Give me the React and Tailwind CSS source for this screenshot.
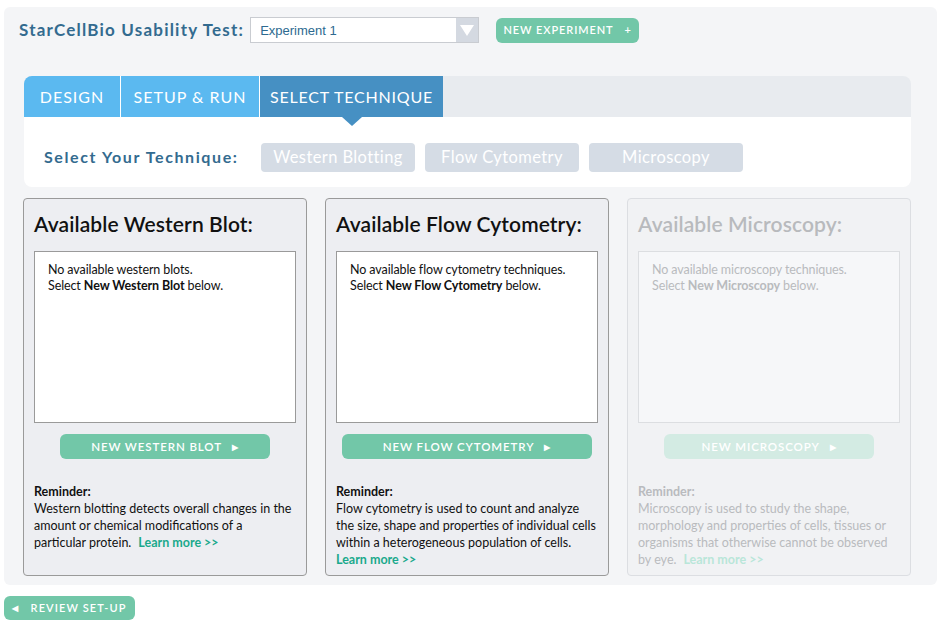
import React from "react";

const font = { fontFamily: "Lato, 'Open Sans', sans-serif" };

function Card({ title, empty1, emptyBold, btn, btnW, reminder, disabled }) {
  const c = disabled;
  return (
    <div
      className={`w-[284px] h-[378px] rounded-[4px] border px-[10px] pt-[11px] ${
        c ? "border-[#dcdee2] bg-[#f1f2f4]" : "border-[#9a9a9a] bg-[#edeef2]"
      }`}
    >
      <div className={`text-[21px] leading-[28px] font-semibold tracking-[0.1px] ${c ? "text-[#b8babd]" : "text-[#111]"}`}>{title}</div>
      <div
        className={`mt-[13px] h-[172px] border px-[13px] pt-[10px] text-[12.5px] leading-[16px] tracking-[-0.1px] ${
          c ? "border-[#dcdee1] bg-[#f6f7f9] text-[#b9bbbe]" : "border-[#9a9a9a] bg-white text-[#111]"
        }`}
      >
        <div>{empty1}</div>
        <div>
          Select <span className="font-bold">{emptyBold}</span> below.
        </div>
      </div>
      <div className="flex justify-center mt-[11px]">
        <div
          className={`h-[25px] rounded-[6px] flex items-center justify-center text-[11.5px] font-semibold tracking-[0.9px] text-white ${btnW} ${
            c ? "bg-[#d3ebe3]" : "bg-[#72c7a8]"
          }`}
        >
          {btn}
          <span className="ml-[10px] text-[8px]">▶</span>
        </div>
      </div>
      <div className={`mt-[24px] text-[12.5px] leading-[17px] whitespace-nowrap ${c ? "text-[#b9bbbe]" : "text-[#111]"}`}>
        <div className="font-bold">Reminder:</div>
        {reminder}
      </div>
    </div>
  );
}

export default function App() {
  return (
    <div className="w-[945px] h-[626px] bg-white pt-[7px] overflow-hidden" style={font}>
      <div className="ml-[4px] w-[933px] h-[578px] bg-[#f4f5f7] rounded-[6px] pt-[10px]">
        {/* header */}
        <div className="flex items-center h-[26px] pl-[15px]">
          <div className="text-[17px] font-bold text-[#336b8f] tracking-[1.2px]">StarCellBio Usability Test:</div>
          <div className="ml-[6px] w-[229px] h-[26px] flex border border-[#c9ccd1] bg-white">
            <div
              className="flex-1 flex items-center pl-[9px] pt-[2px] text-[13px] text-[#2d6a90]"
              style={{ fontFamily: "'Liberation Sans', Arial, sans-serif" }}
            >
              Experiment 1
            </div>
            <div className="w-[22px] bg-[#d4d9e1] flex items-center justify-center">
              <svg width="14" height="11" viewBox="0 0 14 11">
                <polygon points="0,0 14,0 7,11" fill="#fff" />
              </svg>
            </div>
          </div>
          <div className="ml-[17px] w-[143px] h-[25px] rounded-[6px] bg-[#72c7a8] flex items-center justify-center text-white text-[11px] font-semibold tracking-[0.9px]">
            NEW EXPERIMENT<span className="ml-[11px]">+</span>
          </div>
        </div>

        {/* tabs panel */}
        <div className="ml-[20px] w-[887px] mt-[33px]">
          <div className="h-[41px] bg-[#e8ebef] rounded-t-[8px] flex">
            <div className="w-[96px] bg-[#5bb9f0] rounded-tl-[8px] flex items-center justify-center text-white text-[16px] tracking-[1px]">
              DESIGN
            </div>
            <div className="w-px bg-white" />
            <div className="w-[138px] bg-[#5bb9f0] flex items-center justify-center text-white text-[16px] tracking-[1px]">
              SETUP &amp; RUN
            </div>
            <div className="w-px bg-white" />
            <div className="relative w-[183px] bg-[#4690c3] flex items-center justify-center text-white text-[16px] tracking-[0.8px]">
              SELECT TECHNIQUE
              <div className="absolute left-[82px] top-[41px] w-0 h-0 border-l-[10px] border-r-[10px] border-t-[9px] border-l-transparent border-r-transparent border-t-[#4690c3]" />
            </div>
          </div>
          <div className="h-[70px] bg-white rounded-b-[8px] flex items-center pl-[20px] pt-[10px]">
            <div className="w-[217px] text-[16px] font-bold text-[#336b8f] tracking-[1.6px]">Select Your Technique:</div>
            <div className="flex gap-[10px]">
              {["Western Blotting", "Flow Cytometry", "Microscopy"].map((t) => (
                <div
                  key={t}
                  className="w-[154px] h-[29px] rounded-[4px] bg-[#d5dce5] flex items-center justify-center text-white text-[16.5px] tracking-[0.4px]"
                >
                  {t}
                </div>
              ))}
            </div>
          </div>
        </div>

        {/* cards */}
        <div className="ml-[19px] mt-[11px] flex gap-[18px]">
          <Card
            title="Available Western Blot:"
            empty1="No available western blots."
            emptyBold="New Western Blot"
            btn="NEW WESTERN BLOT"
            btnW="w-[210px]"
            reminder={
              <>
                <div>Western blotting detects overall changes in the</div>
                <div>amount or chemical modifications of a</div>
                <div>
                  particular protein.
                  <span className="font-bold text-[#1aa98c] ml-[7px]">Learn more &gt;&gt;</span>
                </div>
              </>
            }
          />
          <Card
            title="Available Flow Cytometry:"
            empty1="No available flow cytometry techniques."
            emptyBold="New Flow Cytometry"
            btn="NEW FLOW CYTOMETRY"
            btnW="w-[250px]"
            reminder={
              <>
                <div>Flow cytometry is used to count and analyze</div>
                <div>the size, shape and properties of individual cells</div>
                <div>within a heterogeneous population of cells.</div>
                <div className="font-bold text-[#1aa98c]">Learn more &gt;&gt;</div>
              </>
            }
          />
          <Card
            disabled
            title="Available Microscopy:"
            empty1="No available microscopy techniques."
            emptyBold="New Microscopy"
            btn="NEW MICROSCOPY"
            btnW="w-[210px]"
            reminder={
              <>
                <div>Microscopy is used to study the shape,</div>
                <div>morphology and properties of cells, tissues or</div>
                <div>organisms that otherwise cannot be observed</div>
                <div>
                  by eye.
                  <span className="font-bold text-[#b9e6d9] ml-[7px]">Learn more &gt;&gt;</span>
                </div>
              </>
            }
          />
        </div>
      </div>

      <div className="ml-[4px] mt-[11px] w-[131px] h-[24px] rounded-[6px] bg-[#72c7a8] flex items-center justify-center text-white text-[11px] font-semibold tracking-[1.1px]">
        <span className="text-[8px] mr-[11px]">◀</span>REVIEW SET-UP
      </div>
    </div>
  );
}
